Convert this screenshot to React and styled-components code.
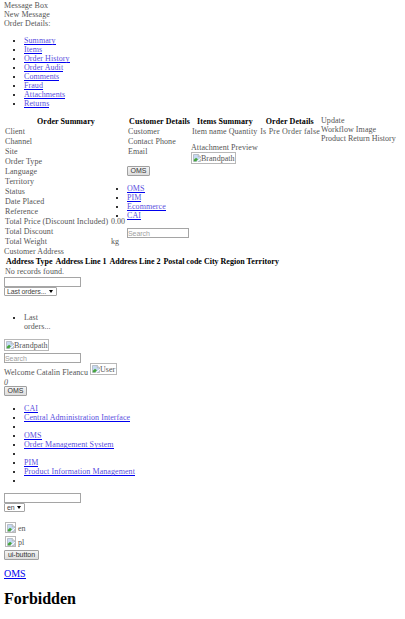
import React from "react";
import styled, { createGlobalStyle } from "styled-components";

const Global = createGlobalStyle`
  * { box-sizing: border-box; }
  html { overflow: hidden; }
  body { margin: 0; background: #fff; overflow: hidden; }
`;
const spacing = (p) => (p.$ls === undefined ? "inherit" : `${p.$ls}px`);
const Page = styled.main`
  height: 619px;
  padding: 1px 4px 0;
  font: 8px/9px "Liberation Serif", serif;
  letter-spacing: 0.07px;
  color: #555;
  white-space: nowrap;
`;
const Line = styled.div`
  height: ${(p) => p.$h || 9}px;
  margin-top: ${(p) => p.$top || 0}px;
  letter-spacing: ${spacing};
`;
const Count = styled.em`
  display: block;
  height: 8px;
`;
const Text = styled.span`
  margin-left: ${(p) => p.$left || 0}px;
  letter-spacing: ${spacing};
`;
const List = styled.ul`
  list-style: none;
  margin: ${(p) => p.$top ?? 8}px 0 0;
  padding: 0 0 0 ${(p) => p.$indent ?? 20}px;
`;
const Item = styled.li`
  display: flex;
  height: ${(p) => p.$h || 9}px;
  &::before {
    content: "";
    width: 2px;
    height: 2px;
    margin: 4px 9px 0 -11px;
    background: #333;
  }
`;
const Link = styled.a`
  height: 9px;
  color: #5a4fe0;
  border-bottom: 1px solid #0000ee;
  letter-spacing: ${spacing};
`;
const Columns = styled.section`
  display: grid;
  grid-template-columns: 123px 64px 130px 1fr;
  height: 131px;
  margin-top: 8px;
`;
const Row = styled.div`
  display: flex;
  height: 10px;
  line-height: 12px;
  padding-left: 1px;
`;
const Name = styled.span`
  width: 106px;
`;
const Head = styled.strong`
  color: #000;
  letter-spacing: ${spacing};
  margin-left: ${(p) => p.$left || 0}px;
`;
const Field = styled.input`
  display: block;
  width: ${(p) => p.$w || 77}px;
  height: 10px;
  margin: ${(p) => p.$top || 0}px 0 0;
  padding: 0;
  border: 1px solid #a5a5a5;
  border-radius: 0;
  background: #fff;
  font: 7px/8px "Liberation Sans", sans-serif;
  letter-spacing: -0.08px;
  &::placeholder { color: #a0a0a0; opacity: 1; }
`;
const Button = styled.button`
  display: block;
  width: ${(p) => p.$w || 23}px;
  height: 10px;
  margin: ${(p) => p.$top || 0}px 0 0;
  padding: 0;
  border: 1px solid #a0a0a0;
  border-radius: 1px;
  background: linear-gradient(#f4f4f4, #ddd);
  color: #333;
  font: 7px/8px "Liberation Sans", sans-serif;
`;
const Select = styled.div`
  display: flex;
  justify-content: space-between;
  width: ${(p) => p.$w}px;
  height: 9px;
  padding: 0 3px 0 2px;
  border: 1px solid #a5a5a5;
  border-radius: 1px;
  color: #444;
  font: 7px/8px "Liberation Sans", sans-serif;
  letter-spacing: -0.12px;
  &::after {
    content: "";
    margin-top: 2px;
    border: 2px solid transparent;
    border-top: 3px solid #000;
    border-bottom: 0;
  }
`;
const Frame = styled.div`
  display: flex;
  width: ${(p) => p.$w}px;
  height: ${(p) => p.$h || 12}px;
  margin-top: ${(p) => p.$top || 0}px;
  border: 1px solid #b8b8b8;
  line-height: 11px;
  svg { flex: none; margin: 1px 0 0 1px; }
`;
const Welcome = styled.div`
  display: flex;
  height: 15px;
  gap: 2px;
`;
const WelcomeText = styled.span`
  width: 84px;
  padding-top: 5px;
`;
const Flag = styled.div`
  display: flex;
  gap: 2px;
  height: 14px;
  padding-left: 1px;
  line-height: 13px;
`;
const Home = styled.a`
  display: block;
  width: max-content;
  height: 11px;
  margin-top: 8px;
  border-bottom: 1px solid #0000ee;
  color: #0000ee;
  font-size: 10px;
  line-height: 11px;
  letter-spacing: 0;
`;
const Title = styled.h1`
  margin: 11px 0 0;
  color: #000;
  font: bold 16px/18px "Liberation Serif", serif;
  letter-spacing: 0;
`;

function Broken() {
  return (
    <svg width="8" height="8" viewBox="0 0 8 8">
      <path d="M.5.5h4.8l2.2 2.2v4.8h-7z" fill="#c6daf3" stroke="#a8adb5" strokeWidth=".7" />
      <path d="M5.3.5v2.2h2.2" fill="#fff" stroke="#999" strokeWidth=".6" />
      <path d="M.8 7.3V5.8L3 3.8l2 1.5-1.8 2z" fill="#45a53b" />
      <path d="M3.7 8L8 4.2" stroke="#fff" />
    </svg>
  );
}
const Picture = ({ alt, ...rest }) => (
  <Frame {...rest}><Broken />{alt && <Text $ls={0.02}>{alt}</Text>}</Frame>
);
const Links = ({ items, ...rest }) => (
  <List {...rest}>
    {items.map((t, i) => <Item key={i}>{t && <Link>{t}</Link>}</Item>)}
  </List>
);

const sections = ["Summary", "Items", "Order History", "Order Audit", "Comments", "Fraud", "Attachments", "Returns"];
const apps = ["OMS", "PIM", "Ecommerce", "CAI"];
const systems = ["CAI", "Central Administration Interface", "", "OMS", "Order Management System", "", "PIM", "Product Information Management", ""];
const summary = [["Client"], ["Channel"], ["Site"], ["Order Type"], ["Language"], ["Territory"], ["Status"], ["Date Placed"], ["Reference"], ["Total Price (Discount Included)", "0.00"], ["Total Discount"], ["Total Weight", "kg"]];

export default function App() {
  return (
    <Page>
      <Global />
      <Line>Message Box</Line>
      <Line>New Message</Line>
      <Line>Order Details:</Line>
      <Links items={sections} />
      <Columns>
        <div>
          <Row><Head $left={32}>Order Summary</Head></Row>
          {summary.map(([n, v]) => <Row key={n}><Name>{n}</Name><Text $ls={0}>{v}</Text></Row>)}
        </div>
        <div>
          <Row><Head $left={1} $ls={0.12}>Customer Details</Head></Row>
          <Row>Customer</Row>
          <Row>Contact Phone</Row>
          <Row>Email</Row>
          <Button $top={10}>OMS</Button>
          <Links items={apps} $indent={0} />
          <Field $w={62} $top={8} placeholder="Search" />
        </div>
        <div>
          <Row><Head $left={5}>Items Summary</Head><Head $left={13} $ls={0.1}>Order Details</Head></Row>
          <Row>Item name Quantity<Text $left={3} $ls={0.2}>Is Pre Order false</Text></Row>
          <Line $top={7}>Attachment Preview</Line>
          <Picture $w={45} alt="Brandpath" />
        </div>
        <div>
          <Line>Update</Line>
          <Line>Workflow Image</Line>
          <Line $ls={0}>Product Return History</Line>
        </div>
      </Columns>
      <Line>Customer Address</Line>
      <Row>
        <Head $left={1} $ls={0}>Address Type</Head>
        <Head $left={3} $ls={-0.03}>Address Line 1</Head>
        <Head $left={3} $ls={-0.03}>Address Line 2</Head>
        <Head $left={3} $ls={0}>Postal code</Head>
        <Head $left={2} $ls={0}>City</Head>
        <Head $left={2} $ls={0}>Region</Head>
        <Head $left={2} $ls={0.08}>Territory</Head>
      </Row>
      <Row>No records found.</Row>
      <Field $top={1} />
      <Select $w={53}>Last orders...</Select>
      <List $top={17}><Item $h={18}><span>Last<br />orders...</span></Item></List>
      <Picture $w={45} $top={8} alt="Brandpath" />
      <Field $top={2} placeholder="Search" />
      <Welcome><WelcomeText>Welcome Catalin Fleancu</WelcomeText><Picture $w={27} alt="User" /></Welcome>
      <Count>0</Count>
      <Button>OMS</Button>
      <Links items={systems} />
      <Field $top={8} />
      <Select $w={21}>en</Select>
      <Line $h={10} />
      <Flag><Picture $w={11} $h={11} />en</Flag>
      <Flag><Picture $w={11} $h={11} />pl</Flag>
      <Button $w={35}>ui-button</Button>
      <Home>OMS</Home>
      <Title>Forbidden</Title>
    </Page>
  );
}
